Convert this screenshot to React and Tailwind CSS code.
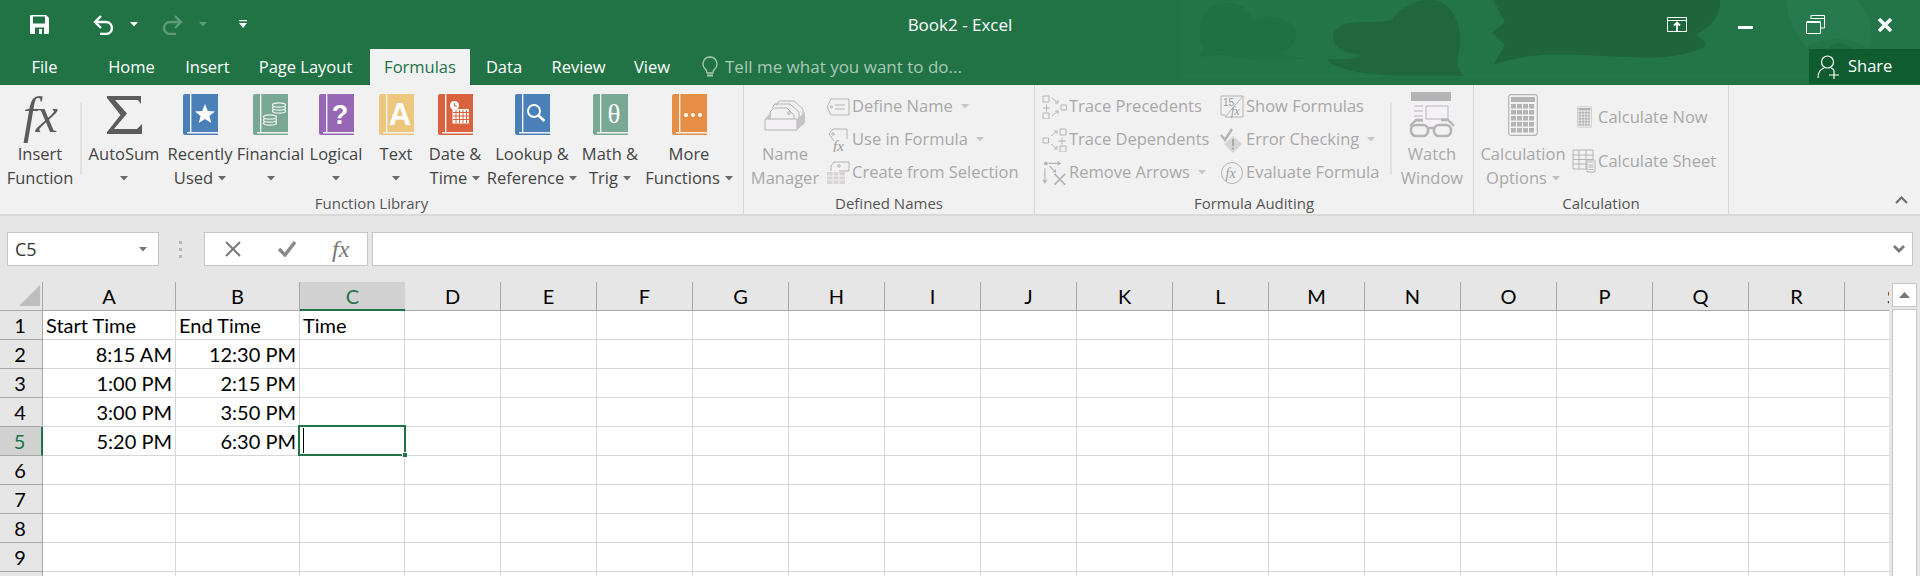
import React from "react";

const GRAY = "#b4b4b4";

const Caret = ({ color = "#6a6a6a", className = "" }) => (
  <svg width="8" height="5" viewBox="0 0 8 5" className={className}><path d="M0 0h8L4 4.5z" fill={color} /></svg>
);

const Book = ({ color, children }) => (
  <svg width="35" height="41" viewBox="0 0 35 41">
    <path d="M2 0H35V41H2Q0 41 0 39V2Q0 0 2 0Z" fill={color} />
    <rect x="7" y="0" width="1.4" height="38.5" fill="#f1f1f1" />
    <rect x="4" y="38" width="31" height="1.5" fill="#f1f1f1" />
    {children}
  </svg>
);

const Coins = () => (
  <g fill="none" stroke="#eef3f0" strokeWidth="1.2">
    {[17, 14, 11].map((y) => <ellipse key={y} cx="26" cy={y} rx="6.5" ry="2.2" fill="#79a896" />)}
    {[29, 26, 23].map((y) => <ellipse key={y} cx="17" cy={y} rx="6.5" ry="2.2" fill="#79a896" />)}
  </g>
);

const CalendarGlyph = () => (
  <g>
    <circle cx="16.5" cy="11.5" r="4.5" fill="#fff" />
    <path d="M16.5 9v3h2.5" stroke="#d9623f" strokeWidth="1" fill="none" />
    <path d="M14.5 15H31V29.5H14.5z" fill="#fff" />
    <path d="M18 16v13M21.5 16v13M25 16v13M28.5 16v13M15 18.5h16M15 22h16M15 25.5h16" stroke="#d9623f" strokeWidth="1" />
  </g>
);

const bookIcons = {
  recent: <Book color="#4a7fb8"><path d="M22 10l2.8 7 7.200.4-5.600 4.600 1.900 7-6.300-4-6.300 4 1.900-7-5.600-4.600 7.200-.4z" fill="#fff" /></Book>,
  financial: <Book color="#79a896"><Coins /></Book>,
  logical: <Book color="#9766b5"><text x="21" y="30" textAnchor="middle" fill="#fff" fontSize="27" fontWeight="700" className="font-['Liberation_Sans',sans-serif]">?</text></Book>,
  text: <Book color="#eec77f"><text x="21" y="31" textAnchor="middle" fill="#fff" fontSize="31" fontWeight="700" className="font-['Liberation_Sans',sans-serif]">A</text></Book>,
  date: <Book color="#d9623f"><CalendarGlyph /></Book>,
  lookup: <Book color="#4a7fb8"><circle cx="19" cy="17" r="6" fill="none" stroke="#fff" strokeWidth="2" /><path d="M23.5 21.5l6 5.5" stroke="#fff" strokeWidth="2.6" /></Book>,
  math: <Book color="#79a896"><text x="21" y="29" textAnchor="middle" fill="#fff" fontSize="27" className="font-['Liberation_Serif',serif]">θ</text></Book>,
  more: <Book color="#e68e45"><circle cx="14" cy="21" r="2" fill="#fff" /><circle cx="21" cy="21" r="2" fill="#fff" /><circle cx="28" cy="21" r="2" fill="#fff" /></Book>,
};

const FxIcon = () => (
  <span className="font-['Liberation_Serif',serif] italic text-[50px] leading-[44px] text-[#5c5c5c] tracking-[-1px]">fx</span>
);

const SigmaIcon = () => (
  <svg width="35" height="38" viewBox="0 0 35 38"><path d="M0 0H34V8L31 4H8L20 17.500 7 33H30L35 28V38H0V36L13.500 19 0 2z" fill="#5c5c5c" /></svg>
);

const NameManagerIcon = () => (
  <svg width="42" height="32" viewBox="0 0 42 32" fill="none" stroke={GRAY} strokeWidth="1">
    <path d="M12 6l3-4h15l9 8v10" />
    <path d="M8 9l3-4h15l9 8v7" />
    <path d="M6 20v-7l4-4h13l7 7v4" fill="#f1f1f1" />
    <circle cx="25" cy="14" r="1.4" />
    <path d="M1 20H33V31H1z" fill="#f4f0f6" />
    <path d="M1 20l6-7v7zM33 20l8-7V24l-8 7z" fill="#c4c4c4" stroke="none" />
  </svg>
);

const WatchIcon = () => (
  <svg width="46" height="46" viewBox="0 0 46 46" fill="none">
    <path d="M2 0H42V34H2z" fill="#f5f2f7" />
    <path d="M2 0H42V9H2z" fill={GRAY} />
    <path d="M17 14H39V27H17zM5 14h9M5 19h9M5 24h9M5 29h9" stroke={GRAY} strokeWidth="1" />
    <path d="M1 34l6-6h7M45 34l-6-6h-7" stroke={GRAY} strokeWidth="2.4" />
    <rect x="2" y="33" width="17" height="11" rx="5" stroke={GRAY} strokeWidth="2.6" fill="#f1f1f1" />
    <rect x="25" y="33" width="17" height="11" rx="5" stroke={GRAY} strokeWidth="2.6" fill="#f1f1f1" />
    <path d="M19 36h6" stroke={GRAY} strokeWidth="2.4" />
  </svg>
);

const CalcIcon = ({ w = 30, h = 42 }) => (
  <svg width={w} height={h} viewBox="0 0 30 42">
    <rect x=".7" y=".7" width="28.6" height="40.6" rx="2.5" fill="#f4f2f5" stroke={GRAY} strokeWidth="1.2" />
    <rect x="3" y="3" width="24" height="5" fill={GRAY} />
    {[10, 16, 22, 28, 34].map((y) => (
      <g key={y} fill={GRAY}>
        {[3, 9, 15, 21].map((x) => <rect key={x} x={x} y={y} width="5" height="4.5" />)}
      </g>
    ))}
  </svg>
);

const smallIcons = {
  define: (
    <svg width="24" height="18" viewBox="0 0 24 18" fill="none" stroke={GRAY} strokeWidth="1">
      <path d="M5 1H23V17H5L1 9z" /><circle cx="5.5" cy="9" r="1" /><path d="M9 7h10M9 11h10" />
    </svg>
  ),
  use: (
    <svg width="20" height="24" viewBox="0 0 20 24" fill="none" stroke={GRAY} strokeWidth="1">
      <path d="M5 1H19V11M1 6l4-5M1 6l5 7" /><circle cx="5" cy="6" r="1.2" />
      <text x="5" y="23" fontSize="15" fontStyle="italic" fill="#9a9a9a" stroke="none" className="font-['Liberation_Serif',serif]">fx</text>
    </svg>
  ),
  create: (
    <svg width="24" height="24" viewBox="0 0 24 24" fill="none" stroke={GRAY} strokeWidth="1">
      <path d="M8 1H23V10H13M8 1L5 5v5" /><circle cx="13" cy="5" r="1.2" />
      <path d="M1 11H19V23H1z" fill="#d8d3d6" stroke="none" /><path d="M1 15h18M1 19h18M7 11v12M13 11v12" stroke="#f1f1f1" />
    </svg>
  ),
  precedents: (
    <svg width="25" height="24" viewBox="0 0 25 24" fill="none" stroke={GRAY} strokeWidth="1">
      <path d="M1 1h6v6H1zM1 18h6v6H1zM19 10h5.5v5H19zM1 13h7M4.5 9.500v7" />
      <path d="M10 3l6 5M16 5v3h-3M10 21l6-5M13 16h3v3" />
    </svg>
  ),
  dependents: (
    <svg width="25" height="24" viewBox="0 0 25 24" fill="none" stroke={GRAY} strokeWidth="1">
      <path d="M1 10h5.500v5H1zM18 1h6v6h-6zM18 18h6v6h-6zM16 13h8M20 9.500v7" />
      <path d="M9 8l6-5M12 3h3v3M9 16l6 5M15 18v3h-3" />
    </svg>
  ),
  remove: (
    <svg width="26" height="26" viewBox="0 0 26 26" fill="none" stroke={GRAY} strokeWidth="1.2">
      <circle cx="4" cy="3" r="2" fill={GRAY} stroke="none" />
      <path d="M7 3h12M16 1l3 2-3 2M3 8v15M1 20l2 3 2-3M8 6l6 6M14 9v3h-3" />
      <path d="M13 14l11 11M24 14L13 25" strokeWidth="1.800" />
    </svg>
  ),
  show: (
    <svg width="24" height="24" viewBox="0 0 24 24" fill="none" stroke={GRAY} strokeWidth="1">
      <path d="M1 1H23L5 22H23V1" /><path d="M1 1V20H5" />
      <text x="3" y="11" fontSize="10" fill="#9a9a9a" stroke="none" className="font-['Liberation_Sans',sans-serif]">15</text>
      <text x="11" y="20" fontSize="12" fontStyle="italic" fill="#9a9a9a" stroke="none" className="font-['Liberation_Serif',serif]">fx</text>
    </svg>
  ),
  error: (
    <svg width="24" height="26" viewBox="0 0 24 26">
      <path d="M1 8l4 5L12 2" fill="none" stroke={GRAY} strokeWidth="2.4" />
      <path d="M13 9l9 8-9 9-9-9z" fill="#d6d6d6" />
      <path d="M12 12h2v7h-2zM12 20.500h2v2h-2z" fill="#a9a9a9" />
    </svg>
  ),
  evaluate: (
    <svg width="24" height="24" viewBox="0 0 24 24" fill="none" stroke={GRAY} strokeWidth="1">
      <circle cx="12" cy="12" r="10.500" />
      <text x="5.500" y="17" fontSize="14" fontStyle="italic" fill="#9a9a9a" stroke="none" className="font-['Liberation_Serif',serif]">fx</text>
    </svg>
  ),
  sheet: (
    <svg width="24" height="24" viewBox="0 0 24 24" fill="none" stroke={GRAY} strokeWidth="1">
      <path d="M1 1H21V20H1zM1 6h20M1 10.500h20M1 15h20M7 1v19M14 1v19" />
      <rect x="15" y="11" width="8" height="12" rx="1" fill="#f1f1f1" />
      <path d="M16.500 13h5M16.500 16h5M16.500 18h5M16.500 20.500h5" />
    </svg>
  ),
};

// big ribbon button: icon on top, one or two text lines below
const BigButton = ({ w, icon, lines, caret, disabled, caretRow }) => {
  const color = disabled ? "text-[#a8a8a8]" : "text-[#444444]";
  const caretColor = disabled ? "#c0c0c0" : "#6a6a6a";
  return (
    <div className={`flex flex-col items-center shrink-0 ${w}`}>
      <div className="h-[57px] pt-[2px] flex items-center justify-center">{icon}</div>
      {lines.map((line, i) => (
        <div key={i} className={`h-[24px] leading-[24px] flex items-center gap-[5px] whitespace-nowrap ${color}`}>
          {line}
          {caret && i === lines.length - 1 && <Caret color={caretColor} />}
        </div>
      ))}
      {caretRow && <div className="h-[24px] flex items-center"><Caret color={caretColor} /></div>}
    </div>
  );
};

const SmallRow = ({ icon, label, caret, iconW = "w-[26px]", h = "h-[33px]" }) => (
  <div className={`flex items-center whitespace-nowrap text-[#a8a8a8] ${h}`}>
    <div className={`${iconW} shrink-0 flex items-center justify-center pr-[2px]`}>{icon}</div>
    {label}
    {caret && <Caret color="#c8c8c8" className="ml-[8px]" />}
  </div>
);

const GroupLabel = ({ children }) => (
  <div className="h-[21px] leading-[21px] text-center text-[15px] text-[#555555]">{children}</div>
);

const Sep = () => <div className="w-[2px] h-[73px] mt-[17px] bg-[#e2e2e2] shrink-0" />;

const TABS = [
  ["File", "w-[89px]"],
  ["Home", "w-[85px]"],
  ["Insert", "w-[67px]"],
  ["Page Layout", "w-[129px]"],
  ["Formulas", "w-[100px]"],
  ["Data", "w-[68px]"],
  ["Review", "w-[81px]"],
  ["View", "w-[66px]"],
];

const TitleArt = () => (
  <svg className="absolute top-0 left-[1180px]" width="740" height="78" viewBox="0 0 740 78">
    <rect width="740" height="78" fill="#237549" />
    <path d="M20 32C18 14 30 3 48 3c14 0 22 8 25 18 10-5 30-5 38 3 9 10 6 24-12 29 8 3 20 5 26 5-30 4-60 2-80-3-10-1-20 2-27 2l6-10c-3-3-4-8-4-15z" fill="#216f44" />
    <path d="M153 38c0-11 12-16 32-16 8 0 18 0 27-2C222 5 238 0 250 0c18 0 32 18 30 44-1 12-6 18 3 32h-50c-40 0-82-6-86-17 12 1 26 1 34-4-16-2-28-7-28-17z" fill="#20673e" />
    <path d="M313 0H540c2 15-10 28-25 35 15 7 15 13-5 17-30 10-70 4-110 3-30-2-60 0-87 10l12-20-13-12 13-11z" fill="#1f653c" />
    <path d="M607 0h70c12 12 18 30 12 50-10-14-50-14-62-2-12-14-22-34-20-48z" fill="#267a4d" />
    <circle cx="660" cy="58" r="15" fill="#206d43" />
  </svg>
);

const COLS = ["A", "B", "C", "D", "E", "F", "G", "H", "I", "J", "K", "L", "M", "N", "O", "P", "Q", "R", "S"];
const CELLS = {
  A1: "Start Time", B1: "End Time", C1: "Time",
  A2: "8:15 AM", B2: "12:30 PM",
  A3: "1:00 PM", B3: "2:15 PM",
  A4: "3:00 PM", B4: "3:50 PM",
  A5: "5:20 PM", B5: "6:30 PM",
};
const GRID = "grid grid-cols-[43px_133px_124px_105px_repeat(16,96px)] grid-rows-[29px]";

const Sheet = () => (
  <div className="relative w-[1889px] h-[294px] overflow-hidden font-['Lato',sans-serif] text-[20px] leading-[22px] text-black">
    <div className={`${GRID} h-[29px] w-max`}>
      <div className="bg-[#e6e6e6] border-r border-b border-[#a8a8a8] flex items-end justify-end pr-[2px] pb-[4px]">
        <svg width="21" height="21" viewBox="0 0 21 21"><path d="M21 0V21H0z" fill="#bdbdbd" /></svg>
      </div>
      {COLS.map((c) => (
        <div
          key={c}
          className={
            c === "C"
              ? "bg-[#d2d2d2] border-b-[2px] border-[#217346] text-[#217346] flex items-center justify-center"
              : "bg-[#e6e6e6] border-r border-b border-[#a8a8a8] flex items-center justify-center"
          }
        >
          {c}
        </div>
      ))}
    </div>
    {[1, 2, 3, 4, 5, 6, 7, 8, 9].map((r) => (
      <div key={r} className={`${GRID} h-[29px] w-max`}>
        <div
          className={
            r === 5
              ? "bg-[#d2d2d2] border-r-[2px] border-b border-r-[#217346] border-b-[#a8a8a8] text-[#217346] flex items-center justify-center pr-[2px]"
              : "bg-[#e6e6e6] border-r border-b border-[#a8a8a8] flex items-center justify-center pr-[2px]"
          }
        >
          {r}
        </div>
        {COLS.map((c) => {
          const text = CELLS[c + r];
          return (
            <div
              key={c}
              className={`relative bg-white border-r border-b border-[#d6d6d6] flex items-center whitespace-nowrap ${r === 1 ? "justify-start pl-[3px]" : "justify-end pr-[3px]"}`}
            >
              {text}
              {c === "C" && r === 5 && (
                <div className="absolute -left-[2px] -top-[2px] w-[108px] h-[31px] border-[2px] border-[#217346] z-10">
                  <div className="w-px h-[25px] mt-[1px] ml-[3px] bg-black" />
                  <div className="absolute -right-[3px] -bottom-[3px] w-[5px] h-[5px] bg-[#217346] border-l border-t border-white" />
                </div>
              )}
            </div>
          );
        })}
      </div>
    ))}
    <div className={`${GRID} h-[5px] w-max`}>
      <div className="bg-[#e6e6e6] border-r border-[#a8a8a8]" />
      {COLS.map((c) => <div key={c} className="bg-white border-r border-[#d6d6d6]" />)}
    </div>
  </div>
);

export default function App() {
  return (
    <div className="w-[1920px] h-[576px] overflow-hidden bg-[#e6e6e6] font-['Open_Sans',sans-serif] text-[16.5px]">
      {/* title bar + tabs */}
      <div className="relative h-[85px] bg-[#217346] text-white overflow-hidden">
        <TitleArt />
        <div className="relative h-[49px] flex items-center">
          <div className="flex-1 flex items-center">
            <svg className="ml-[30px]" width="19" height="19" viewBox="0 0 19 19">
              <path d="M1 0H16L19 3V18a1 1 0 0 1-1 1H1a1 1 0 0 1-1-1V1a1 1 0 0 1 1-1z" fill="#fff" />
              <path d="M3 1.500H15V8.500H3z" fill="#217346" />
              <path d="M5 12.500H14V19H5z" fill="#217346" />
              <path d="M9 14H12V19H9z" fill="#fff" />
            </svg>
            <svg className="ml-[44px]" width="22" height="20" viewBox="0 0 22 20" fill="none" stroke="#fff" strokeWidth="2.4">
              <path d="M2 7h11a6 6 0 0 1 0 12H7" /><path d="M8 1L2 7l6 6" />
            </svg>
            <Caret color="#fff" className="ml-[15px]" />
            <svg className="ml-[23px]" width="22" height="20" viewBox="0 0 22 20" fill="none" stroke="#5f9c7c" strokeWidth="2.4">
              <path d="M20 7H9a6 6 0 0 0 0 12h6" /><path d="M14 1l6 6-6 6" />
            </svg>
            <Caret color="#5f9c7c" className="ml-[16px]" />
            <svg className="ml-[32px]" width="8" height="9" viewBox="0 0 8 9">
              <path d="M0 0h8v1.200H0zM0 3h8L4 8z" fill="#fff" />
            </svg>
          </div>
          <div className="text-[17px] whitespace-nowrap">Book2 - Excel</div>
          <div className="flex-1 flex items-center justify-end">
            <svg width="20" height="15" viewBox="0 0 20 15" fill="none" stroke="#fff" strokeWidth="1">
              <path d="M.5.500h19v14H.5zM.5 3.500h19" />
              <path d="M10 14V6M7 8.500L10 5.500l3 3" strokeWidth="1.800" />
            </svg>
            <div className="ml-[51px] w-[15px] h-[3px] bg-white mt-[5px]" />
            <svg className="ml-[53px]" width="19" height="19" viewBox="0 0 19 19" fill="none" stroke="#fff" strokeWidth="1">
              <path d="M5 4V.500h13.500V13H15" /><path d="M5 3.500h13" /><path d="M.5 7.500h14V18.500H.5zM.5 6.500h14" />
            </svg>
            <svg className="ml-[53px] mr-[28px]" width="14" height="14" viewBox="0 0 14 14" stroke="#fff" strokeWidth="3.400">
              <path d="M1 1l12 12M13 1L1 13" />
            </svg>
          </div>
        </div>
        <div className="relative h-[36px] flex items-stretch">
          {TABS.map(([name, w]) => (
            <div
              key={name}
              className={`${w} flex items-center justify-center whitespace-nowrap ${name === "Formulas" ? "bg-[#f1f1f1] text-[#217346]" : ""}`}
            >
              {name}
            </div>
          ))}
          <div className="ml-[17px] flex items-center text-[#a9c9b7]">
            <svg width="16" height="22" viewBox="0 0 16 22" fill="none" stroke="#a9c9b7" strokeWidth="1.300">
              <path d="M8 1a7 7 0 0 0-4.500 12.300C4.800 14.500 5 16 5 17h6c0-1 .2-2.500 1.500-3.700A7 7 0 0 0 8 1z" />
              <path d="M5 19.500h6" strokeWidth="2" />
            </svg>
            <span className="ml-[7px] whitespace-nowrap text-[17px]">Tell me what you want to do...</span>
          </div>
          <div className="absolute right-0 top-0 w-[111px] h-[35px] bg-[#0f5c31] flex items-center">
            <svg className="ml-[8px]" width="23" height="24" viewBox="0 0 23 24" fill="none" stroke="#fff" strokeWidth="1.200">
              <circle cx="10.500" cy="7" r="6" />
              <path d="M1 23c0-6 3-9 6-10M14 13c1 .5 2 1 3 2M12 20h10M17 15v9" />
            </svg>
            <span className="ml-[8px]">Share</span>
          </div>
        </div>
      </div>

      {/* ribbon */}
      <div className="h-[131px] bg-[#f1f1f1] border-b-[2px] border-[#d9d9d9] flex">
        <div className="w-[743px] shrink-0 flex flex-col">
          <div className="h-[110px] flex">
            <BigButton w="w-[80px]" icon={<FxIcon />} lines={["Insert", "Function"]} />
            <Sep />
            <BigButton w="w-[84px]" icon={<SigmaIcon />} lines={["AutoSum"]} caretRow />
            <BigButton w="w-[68px]" icon={bookIcons.recent} lines={["Recently", "Used"]} caret />
            <BigButton w="w-[73px]" icon={bookIcons.financial} lines={["Financial"]} caretRow />
            <BigButton w="w-[58px]" icon={bookIcons.logical} lines={["Logical"]} caretRow />
            <BigButton w="w-[62px]" icon={bookIcons.text} lines={["Text"]} caretRow />
            <BigButton w="w-[56px]" icon={bookIcons.date} lines={["Date &", "Time"]} caret />
            <BigButton w="w-[98px]" icon={bookIcons.lookup} lines={["Lookup &", "Reference"]} caret />
            <BigButton w="w-[58px]" icon={bookIcons.math} lines={["Math &", "Trig"]} caret />
            <BigButton w="w-[100px]" icon={bookIcons.more} lines={["More", "Functions"]} caret />
          </div>
          <GroupLabel>Function Library</GroupLabel>
        </div>
        <div className="w-[291px] shrink-0 flex flex-col border-l border-[#d6d6d6]">
          <div className="h-[110px] flex">
            <BigButton w="w-[82px]" icon={<NameManagerIcon />} lines={["Name", "Manager"]} disabled />
            <div className="pt-[5px]">
              <SmallRow icon={smallIcons.define} label="Define Name" caret />
              <SmallRow icon={smallIcons.use} label="Use in Formula" caret />
              <SmallRow icon={smallIcons.create} label="Create from Selection" />
            </div>
          </div>
          <GroupLabel>Defined Names</GroupLabel>
        </div>
        <div className="w-[439px] shrink-0 flex flex-col border-l border-[#d6d6d6]">
          <div className="h-[110px] flex">
            <div className="pt-[5px] pl-[7px] w-[185px] shrink-0">
              <SmallRow icon={smallIcons.precedents} iconW="w-[27px]" label="Trace Precedents" />
              <SmallRow icon={smallIcons.dependents} iconW="w-[27px]" label="Trace Dependents" />
              <SmallRow icon={smallIcons.remove} iconW="w-[27px]" label="Remove Arrows" caret />
            </div>
            <div className="pt-[5px] w-[170px] shrink-0">
              <SmallRow icon={smallIcons.show} label="Show Formulas" />
              <SmallRow icon={smallIcons.error} label="Error Checking" caret />
              <SmallRow icon={smallIcons.evaluate} label="Evaluate Formula" />
            </div>
            <Sep />
            <BigButton w="w-[80px]" icon={<WatchIcon />} lines={["Watch", "Window"]} disabled />
          </div>
          <GroupLabel>Formula Auditing</GroupLabel>
        </div>
        <div className="w-[256px] shrink-0 flex flex-col border-l border-r border-[#d6d6d6]">
          <div className="h-[110px] flex">
            <BigButton w="w-[98px]" icon={<CalcIcon />} lines={["Calculation", "Options"]} caret disabled />
            <div className="pt-[10px]">
              <SmallRow icon={<CalcIcon w={15} h={22} />} label="Calculate Now" h="h-[44px]" />
              <SmallRow icon={smallIcons.sheet} label="Calculate Sheet" h="h-[44px]" />
            </div>
          </div>
          <GroupLabel>Calculation</GroupLabel>
        </div>
        <div className="flex-1 flex items-end justify-end pr-[12px] pb-[10px]">
          <svg width="13" height="8" viewBox="0 0 13 8" fill="none" stroke="#6a6a6a" strokeWidth="2"><path d="M1 7l5.500-5.500L12 7" /></svg>
        </div>
      </div>

      {/* formula bar */}
      <div className="h-[66px] pt-[16px] flex items-start">
        <div className="ml-[7px] w-[152px] h-[34px] bg-white border border-[#c6c6c6] flex items-center justify-between pl-[7px] pr-[11px] text-[#333333] text-[18px]">
          C5
          <Caret color="#777777" />
        </div>
        <div className="ml-[20px] flex flex-col gap-[4px] py-[9px]">
          <div className="w-[3px] h-[3px] bg-[#b8b8b8]" />
          <div className="w-[3px] h-[3px] bg-[#b8b8b8]" />
          <div className="w-[3px] h-[3px] bg-[#b8b8b8]" />
        </div>
        <div className="ml-[22px] w-[164px] h-[34px] bg-white border border-[#c6c6c6] flex items-center">
          <svg className="ml-[20px]" width="16" height="16" viewBox="0 0 16 16" stroke="#777777" strokeWidth="2"><path d="M1 1l14 14M15 1L1 15" /></svg>
          <svg className="ml-[37px]" width="18" height="16" viewBox="0 0 18 16" fill="none" stroke="#8a8a8a" strokeWidth="3.400"><path d="M1 8l6 6L17 1" /></svg>
          <span className="ml-[36px] font-['Liberation_Serif',serif] italic text-[24px] leading-none text-[#777777]">fx</span>
        </div>
        <div className="ml-[4px] w-[1541px] h-[34px] bg-white border border-[#c6c6c6] flex items-center justify-end pr-[7px]">
          <svg width="12" height="8" viewBox="0 0 12 8" fill="none" stroke="#777777" strokeWidth="2.800"><path d="M1 1l5 5 5-5" /></svg>
        </div>
      </div>

      {/* sheet + scrollbar */}
      <div className="flex">
        <Sheet />
        <div className="ml-[3px] w-[25px] flex flex-col gap-[2px] pt-[1px]">
          <div className="h-[24px] bg-white border border-[#c6c6c6] flex items-center justify-center">
            <svg width="11" height="6" viewBox="0 0 11 6"><path d="M0 6h11L5.500 0z" fill="#777777" /></svg>
          </div>
          <div className="h-[270px] bg-white border border-[#c6c6c6]" />
        </div>
      </div>
    </div>
  );
}
